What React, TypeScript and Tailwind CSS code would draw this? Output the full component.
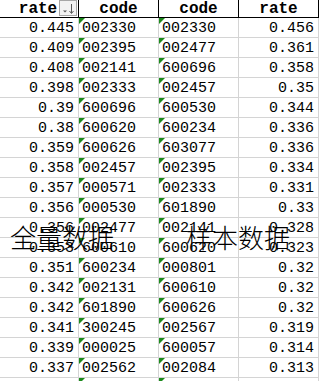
const rows: [string, string, string, string][] = [
  ['0.445', '002330', '002330', '0.456'],
  ['0.409', '002395', '002477', '0.361'],
  ['0.408', '002141', '600696', '0.358'],
  ['0.398', '002333', '002457', '0.35'],
  ['0.39', '600696', '600530', '0.344'],
  ['0.38', '600620', '600234', '0.336'],
  ['0.359', '600626', '603077', '0.336'],
  ['0.358', '002457', '002395', '0.334'],
  ['0.357', '000571', '002333', '0.331'],
  ['0.356', '000530', '601890', '0.33'],
  ['0.356', '002477', '002141', '0.328'],
  ['0.353', '600610', '600620', '0.323'],
  ['0.351', '600234', '000801', '0.32'],
  ['0.342', '002131', '600610', '0.32'],
  ['0.342', '601890', '600626', '0.32'],
  ['0.341', '300245', '002567', '0.319'],
  ['0.339', '000025', '600057', '0.314'],
  ['0.337', '002562', '002084', '0.313'],
  ['', '', '', ''],
];

function Flag() {
  return <span className="absolute left-0 top-0 w-0 h-0 border-t-[6px] border-r-[6px] border-t-[#1b8a1b] border-r-transparent" />;
}

function FilterButton() {
  return (
    <div className="absolute right-[1px] top-0 w-[18px] h-[16px] border border-[#a6a6a6] bg-[#f2f2f2] flex items-center justify-center">
      <svg width="16" height="14" viewBox="0 0 16 14">
        <path d="M3 9.5h4l-2 2z" fill="#595959" />
        <path d="M11.5 3v9" stroke="#595959" strokeWidth="1" />
        <path d="M9.5 10l2 2.5 2-2.5" stroke="#595959" strokeWidth="1" fill="none" />
      </svg>
    </div>
  );
}

export default function App() {
  const head = 'relative h-[18px] border-b border-r border-black flex items-center justify-center text-[16px] font-bold leading-none font-["Liberation_Mono","DejaVu_Sans_Mono",monospace]';
  const num = 'h-[20px] border-b border-r border-[#d4d4d4] flex items-center justify-end pr-[4px] pt-[1px]';
  const code = 'relative h-[20px] border-b border-r border-[#d4d4d4] flex items-center pl-[3px] pt-[1px]';

  return (
    <div className="relative w-[319px] h-[381px] overflow-hidden bg-white text-black font-['Liberation_Mono','DejaVu_Sans_Mono',monospace]">
      <div className="grid grid-cols-[79px_80px_80px_80px] text-[15px] leading-none">
        <div className={head}>
          <span className="-ml-[2px]">rate</span>
          <FilterButton />
        </div>
        <div className={head}>code</div>
        <div className={head}>code</div>
        <div className={head}>rate</div>
        {rows.map((r, i) => (
          <div key={i} className="contents">
            <div className={num}>{r[0]}</div>
            <div className={code}>
              <Flag />
              {r[1]}
            </div>
            <div className={code}>
              <Flag />
              {r[2]}
            </div>
            <div className={num}>{r[3]}</div>
          </div>
        ))}
      </div>
      <div className="absolute left-[10px] top-[224px] text-[26px] leading-none font-['Noto_Sans_CJK_SC',sans-serif] font-light">全量数据</div>
      <div className="absolute left-[186px] top-[224px] text-[26px] leading-none font-['Noto_Sans_CJK_SC',sans-serif] font-light">样本数据</div>
    </div>
  );
}
